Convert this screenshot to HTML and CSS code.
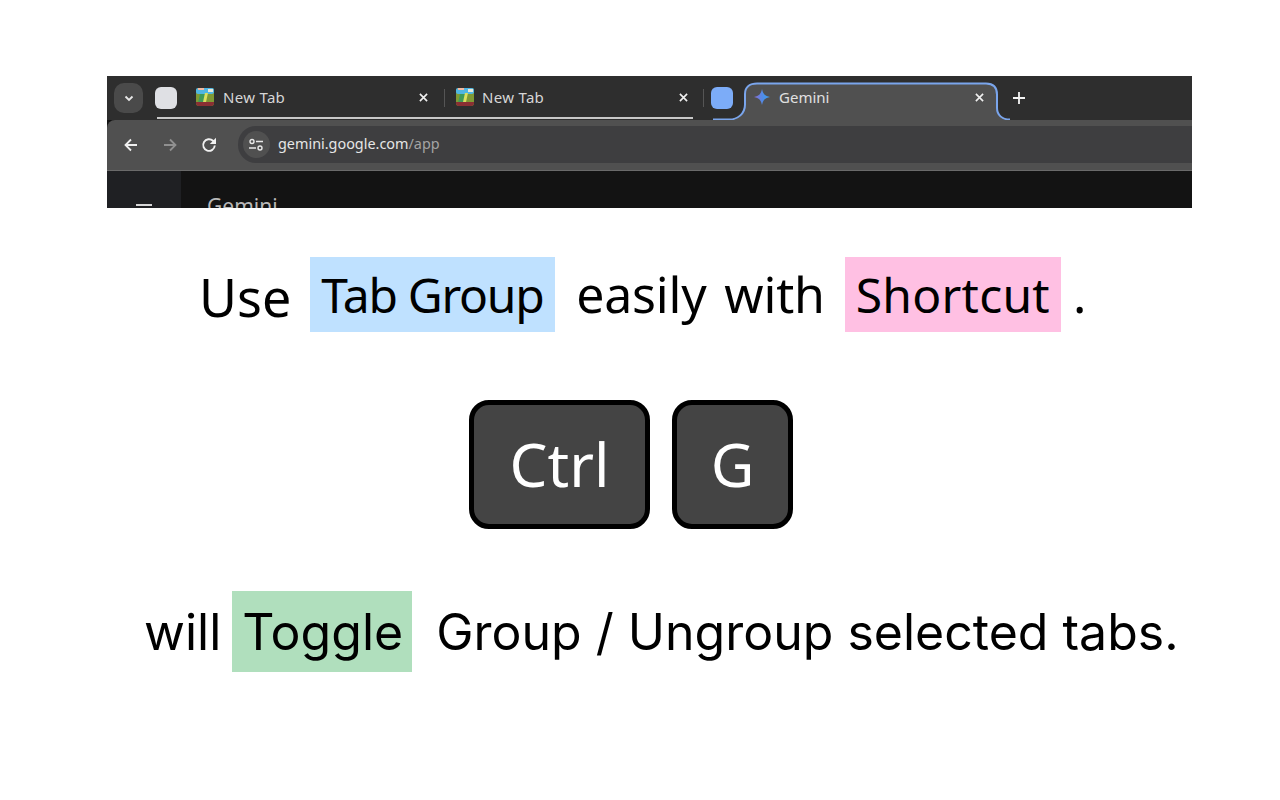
FILE: index.html
```html
<!DOCTYPE html>
<html lang="en">
<head>
<meta charset="utf-8">
<title>Tab Group Shortcut</title>
<link rel="stylesheet" href="styles.css">
</head>
<body>
<main class="page">
  <section class="browser">
    <div class="tabstrip">
      <div class="tab-search"><svg width="12" height="12" viewBox="0 0 12 12"><path d="M2.500 4.500 6 8l3.500-3.500" fill="none" stroke="#e8e8e8" stroke-width="1.800"/></svg></div>
      <div class="tab-group">
        <span class="group-dot"></span>
        <div class="tab tab-first">
          <svg class="favicon" viewBox="0 0 18 18"><rect width="18" height="18" rx="3" fill="#7f9a35"/><rect width="18" height="6" rx="2" fill="#4fb6e4"/><path d="M2 0h6v2H2z" fill="#f2b8a0"/><path d="M12 1h5v3h-5z" fill="#e8e8d8"/><path d="M4 6h6l-2 9H2z" fill="#3f9a5a"/><path d="M9 5h3l-2 9H7z" fill="#dbe060"/><path d="M0 14h18v1a3 3 0 0 1-3 3H3a3 3 0 0 1-3-3z" fill="#8a2f33"/></svg>
          <span class="tab-title">New Tab</span>
          <svg class="close" viewBox="0 0 10 10"><path d="M1 1l8 8M9 1l-8 8" stroke="#f0f0f0" stroke-width="1.800"/></svg>
        </div>
        <span class="sep"></span>
        <div class="tab tab-second">
          <svg class="favicon" viewBox="0 0 18 18"><rect width="18" height="18" rx="3" fill="#7f9a35"/><rect width="18" height="6" rx="2" fill="#4fb6e4"/><path d="M2 0h6v2H2z" fill="#f2b8a0"/><path d="M12 1h5v3h-5z" fill="#e8e8d8"/><path d="M4 6h6l-2 9H2z" fill="#3f9a5a"/><path d="M9 5h3l-2 9H7z" fill="#dbe060"/><path d="M0 14h18v1a3 3 0 0 1-3 3H3a3 3 0 0 1-3-3z" fill="#8a2f33"/></svg>
          <span class="tab-title">New Tab</span>
          <svg class="close" viewBox="0 0 10 10"><path d="M1 1l8 8M9 1l-8 8" stroke="#f0f0f0" stroke-width="1.800"/></svg>
        </div>
      </div>
      <span class="sep sep-end"></span>
      <span class="group-dot group-dot-blue"></span>
      <div class="tab-active">
        <svg class="tab-shape" width="297" height="44" viewBox="0 0 297 44"><path d="M0 43.500H16c9 0 16-6 16-15V18C32 11 37 7.500 44 7.500H273c7 0 11 4 11 11V32c0 7 5 11.500 13 11.500V44H0z" fill="#505050"/><path d="M0 43.500H16c9 0 16-6 16-15V18C32 11 37 7.500 44 7.500H273c7 0 11 4 11 11V32c0 7 5 11.500 13 11.500" fill="none" stroke="#7aa5ec" stroke-width="2"/></svg>
        <svg class="star" viewBox="0 0 16 16"><defs><linearGradient id="gem" x1="0" y1="0.500" x2="1" y2="0.500"><stop offset="0" stop-color="#8b6ad0"/><stop offset="0.600" stop-color="#4a8fe8"/><stop offset="1" stop-color="#3f9ae6"/></linearGradient></defs><path d="M8 0c.8 4.500 3 7.200 8 8-5 .8-7.200 3.500-8 8-.8-4.500-3-7.200-8-8 5-.8 7.200-3.500 8-8z" fill="url(#gem)"/></svg>
        <span class="tab-title tab-title-active">Gemini</span>
        <svg class="close close-active" viewBox="0 0 10 10"><path d="M1 1l8 8M9 1l-8 8" stroke="#f0f0f0" stroke-width="1.800"/></svg>
      </div>
      <svg class="plus" viewBox="0 0 12 12"><path d="M6 0v12M0 6h12" stroke="#f4f4f4" stroke-width="1.800"/></svg>
    </div>
    <div class="toolbar">
      <svg class="nav nav-back" viewBox="0 0 16 16"><path d="M14 8H2.500M8 2.500 2.500 8 8 13.500" fill="none" stroke="#f0f0f0" stroke-width="1.800"/></svg>
      <svg class="nav nav-forward" viewBox="0 0 16 16"><path d="M2 8h11.500M8 2.500 13.500 8 8 13.500" fill="none" stroke="#909090" stroke-width="1.800"/></svg>
      <svg class="nav nav-reload" viewBox="0 0 16 16"><path d="M13.800 8.500A5.800 5.800 0 1 1 12 3.800L14 5.800" fill="none" stroke="#f0f0f0" stroke-width="1.900"/><path d="M15 0.800V7H8.800z" fill="#f0f0f0"/></svg>
      <div class="omnibox">
        <span class="site-info"><svg width="16" height="14" viewBox="0 0 16 14"><circle cx="4" cy="3.500" r="2" fill="none" stroke="#e8e8e8" stroke-width="1.400"/><path d="M8 3.500h7M1 10h7" stroke="#e8e8e8" stroke-width="1.600"/><circle cx="12" cy="10" r="2" fill="none" stroke="#e8e8e8" stroke-width="1.400"/></svg></span>
        <span class="url">gemini.google.com<span class="url-path">/app</span></span>
      </div>
    </div>
    <div class="viewport">
      <div class="sidebar"><span class="menu-line"></span></div>
      <div class="app-title">Gemini</div>
    </div>
  </section>

  <p class="line line-one">
    <span class="word-use">Use</span>
    <span class="chip chip-blue">Tab Group</span>
    <span class="word-easily">easily with</span>
    <span class="chip chip-pink">Shortcut</span>
    <span class="word-dot">.</span>
  </p>

  <div class="keys">
    <kbd class="key key-ctrl">Ctrl</kbd>
    <kbd class="key key-g">G</kbd>
  </div>

  <p class="line line-three">
    <span class="nudge">will</span>
    <span class="chip-green">Toggle</span>
    <span class="nudge rest">Group / Ungroup selected tabs.</span>
  </p>
</main>
</body>
</html>
```

FILE: styles.css
```css
* { box-sizing: border-box; }
html, body { margin: 0; padding: 0; background: #fff; }
.page { width: 1280px; height: 800px; padding-top: 76px; overflow: hidden; color: #000; }

.browser { width: 1085px; height: 132px; margin-left: 107px; overflow: hidden; background: #131313; font-family: "Noto Sans", sans-serif; }
.tabstrip { height: 44px; display: flex; align-items: flex-start; background: #2e2e2e; padding-left: 7px; }
.tab-search { width: 29px; height: 30px; margin-top: 7px; border-radius: 10px; background: #4a4a4a; display: flex; align-items: center; justify-content: center; }
.tab-group { width: 536px; height: 43px; margin-left: 14px; border-bottom: 2px solid #c8c8c8; display: flex; align-items: flex-start; }
.group-dot { width: 22px; height: 22px; flex: none; margin: 11px 0 0 -2px; border-radius: 6px; background: #dfe0e4; }
.group-dot-blue { margin-left: 7px; background: #7cacf8; position: relative; z-index: 1; }
.tab { display: flex; align-items: center; height: 40px; padding-top: 2px; }
.tab-first { width: 267px; padding: 2px 16px 0 19px; }
.tab-second { width: 237px; padding: 2px 5px 0 0; }
.favicon { width: 18px; height: 18px; flex: none; }
.tab-title { margin-left: 9px; font-size: 15px; letter-spacing: 0.300px; line-height: 20px; color: #d6d6d6; white-space: nowrap; }
.tab-second .tab-title { margin-left: 8px; }
.close { width: 9px; height: 9px; margin-left: auto; }
.sep { width: 1px; height: 18px; margin: 13px 11px 0 0; flex: none; background: #555; }
.sep-end { margin: 13px 0 0 10px; }

.tab-active { position: relative; width: 277px; height: 44px; display: flex; align-items: center; padding: 0 26px 2px 21px; }
.tab-shape { position: absolute; left: -20px; top: 0; }
.star { position: relative; width: 16px; height: 16px; flex: none; }
.tab-title-active { position: relative; margin-left: 9px; letter-spacing: 0; color: #e0e0e0; }
.close-active { position: relative; }
.plus { width: 12px; height: 12px; margin: 16px 0 0 3px; }

.toolbar { height: 51px; display: flex; align-items: center; background: #505050; border-bottom: 1px solid #6a6a6a; border-top-left-radius: 8px; padding: 0 0 1px 16px; }
.nav { width: 16px; height: 16px; flex: none; }
.nav-forward { margin-left: 23px; }
.nav-reload { margin-left: 23px; }
.omnibox { flex: 1; height: 37px; margin-left: 21px; display: flex; align-items: center; background: #3e3e40; border-radius: 18px 0 0 18px; padding-left: 5px; }
.site-info { width: 27px; height: 27px; border-radius: 50%; background: #505050; display: flex; align-items: center; justify-content: center; padding-right: 2px; }
.url { margin: 0 0 2px 8px; font-size: 14.400px; color: #e6e6e6; white-space: nowrap; }
.url-path { color: #a4a4a4; }

.viewport { height: 37px; display: flex; }
.sidebar { width: 74px; background: #1f2023; padding: 33px 0 0 29px; }
.menu-line { display: block; width: 16px; height: 2px; background: #d8d8d8; }
.app-title { margin: 22px 0 0 26px; font-size: 21px; line-height: 26px; color: #b8b8b8; }

.line { margin: 0; display: flex; align-items: center; white-space: nowrap; }
.line-one { margin-top: 49px; height: 75px; padding-left: 199px; font-size: 50px; font-family: "Noto Sans", sans-serif; line-height: 55px; }
.word-use { margin-top: 4px; font-size: 52px; }
.chip { display: block; padding: 10px 11px; font-size: 48px; }
.chip-blue { width: 245px; margin-left: 19px; background: #bfe1ff; letter-spacing: -1.300px; }
.chip-pink { margin-left: 20px; background: #ffc0e3; letter-spacing: 0.250px; }
.word-easily { margin-left: 21px; letter-spacing: -0.200px; word-spacing: 5px; }
.word-dot { margin-left: 12px; }

.keys { display: flex; gap: 22px; margin: 68px 0 0 469px; }
.key { display: flex; align-items: center; justify-content: center; height: 129px; padding-bottom: 2px; border: 5px solid #000; border-radius: 20px; background: #444; color: #fff; font-family: "Noto Sans", sans-serif; font-size: 60px; }
.key-ctrl { width: 181px; }
.key-g { width: 121px; }

.line-three { margin-top: 62px; height: 81px; padding-left: 144px; font-size: 50px; font-family: Inter, sans-serif; line-height: 61px; }
.nudge { margin-top: 2px; }
.chip-green { display: block; margin-left: 11px; padding: 11px 9px 9px 10px; background: #b0dfbd; }
.rest { margin-left: 24px; }
```
